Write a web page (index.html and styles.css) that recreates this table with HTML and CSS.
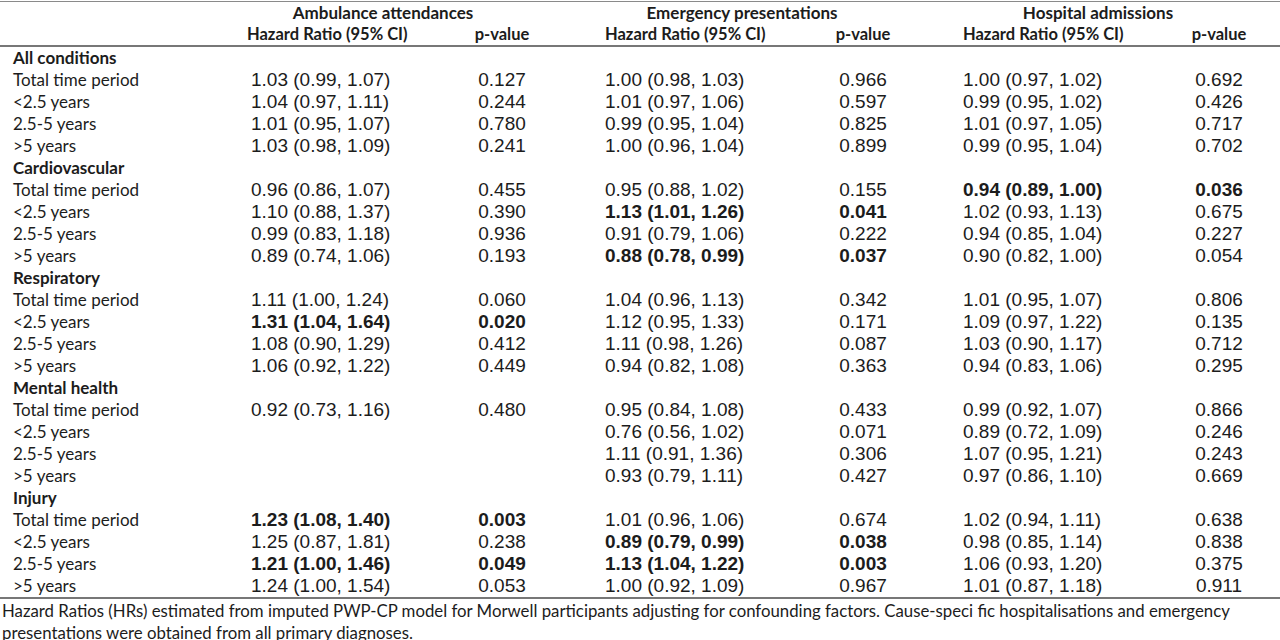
FILE: index.html
```html
<!DOCTYPE html>
<html>
<head>
    <meta charset="UTF-8">
    <title>Hazard ratios</title>
    <link rel="stylesheet" href="styles.css">
</head>
<body>
    <table class="hr-table">
        <colgroup>
            <col class="c-label">
            <col class="c-hr1">
            <col class="c-p1">
            <col class="c-hr2">
            <col class="c-p2">
            <col class="c-hr3">
            <col class="c-p3">
        </colgroup>
        <thead>
            <tr class="group-row">
                <th></th>
                <th colspan="2" class="grp grp-amb">Ambulance attendances</th>
                <th colspan="2" class="grp grp-emg">Emergency presentations</th>
                <th colspan="2" class="grp grp-hos">Hospital admissions</th>
            </tr>
            <tr class="sub-row">
                <th></th>
                <th class="h-hr h1">Hazard Ratio (95% CI)</th>
                <th class="h-p">p-value</th>
                <th class="h-hr h2">Hazard Ratio (95% CI)</th>
                <th class="h-p">p-value</th>
                <th class="h-hr h3">Hazard Ratio (95% CI)</th>
                <th class="h-p">p-value</th>
            </tr>
        </thead>
        <tbody>
            <tr><td class="cat" colspan="7">All conditions</td></tr>
            <tr><td class="lbl">Total time period</td><td class="hr h1">1.03 (0.99, 1.07)</td><td class="pv">0.127</td><td class="hr h2">1.00 (0.98, 1.03)</td><td class="pv">0.966</td><td class="hr h3">1.00 (0.97, 1.02)</td><td class="pv">0.692</td></tr>
            <tr><td class="lbl">&lt;2.5 years</td><td class="hr h1">1.04 (0.97, 1.11)</td><td class="pv">0.244</td><td class="hr h2">1.01 (0.97, 1.06)</td><td class="pv">0.597</td><td class="hr h3">0.99 (0.95, 1.02)</td><td class="pv">0.426</td></tr>
            <tr><td class="lbl">2.5-5 years</td><td class="hr h1">1.01 (0.95, 1.07)</td><td class="pv">0.780</td><td class="hr h2">0.99 (0.95, 1.04)</td><td class="pv">0.825</td><td class="hr h3">1.01 (0.97, 1.05)</td><td class="pv">0.717</td></tr>
            <tr><td class="lbl">&gt;5 years</td><td class="hr h1">1.03 (0.98, 1.09)</td><td class="pv">0.241</td><td class="hr h2">1.00 (0.96, 1.04)</td><td class="pv">0.899</td><td class="hr h3">0.99 (0.95, 1.04)</td><td class="pv">0.702</td></tr>

            <tr><td class="cat" colspan="7">Cardiovascular</td></tr>
            <tr><td class="lbl">Total time period</td><td class="hr h1">0.96 (0.86, 1.07)</td><td class="pv">0.455</td><td class="hr h2">0.95 (0.88, 1.02)</td><td class="pv">0.155</td><td class="hr h3 sig">0.94 (0.89, 1.00)</td><td class="pv sig">0.036</td></tr>
            <tr><td class="lbl">&lt;2.5 years</td><td class="hr h1">1.10 (0.88, 1.37)</td><td class="pv">0.390</td><td class="hr h2 sig">1.13 (1.01, 1.26)</td><td class="pv sig">0.041</td><td class="hr h3">1.02 (0.93, 1.13)</td><td class="pv">0.675</td></tr>
            <tr><td class="lbl">2.5-5 years</td><td class="hr h1">0.99 (0.83, 1.18)</td><td class="pv">0.936</td><td class="hr h2">0.91 (0.79, 1.06)</td><td class="pv">0.222</td><td class="hr h3">0.94 (0.85, 1.04)</td><td class="pv">0.227</td></tr>
            <tr><td class="lbl">&gt;5 years</td><td class="hr h1">0.89 (0.74, 1.06)</td><td class="pv">0.193</td><td class="hr h2 sig">0.88 (0.78, 0.99)</td><td class="pv sig">0.037</td><td class="hr h3">0.90 (0.82, 1.00)</td><td class="pv">0.054</td></tr>

            <tr><td class="cat" colspan="7">Respiratory</td></tr>
            <tr><td class="lbl">Total time period</td><td class="hr h1">1.11 (1.00, 1.24)</td><td class="pv">0.060</td><td class="hr h2">1.04 (0.96, 1.13)</td><td class="pv">0.342</td><td class="hr h3">1.01 (0.95, 1.07)</td><td class="pv">0.806</td></tr>
            <tr><td class="lbl">&lt;2.5 years</td><td class="hr h1 sig">1.31 (1.04, 1.64)</td><td class="pv sig">0.020</td><td class="hr h2">1.12 (0.95, 1.33)</td><td class="pv">0.171</td><td class="hr h3">1.09 (0.97, 1.22)</td><td class="pv">0.135</td></tr>
            <tr><td class="lbl">2.5-5 years</td><td class="hr h1">1.08 (0.90, 1.29)</td><td class="pv">0.412</td><td class="hr h2">1.11 (0.98, 1.26)</td><td class="pv">0.087</td><td class="hr h3">1.03 (0.90, 1.17)</td><td class="pv">0.712</td></tr>
            <tr><td class="lbl">&gt;5 years</td><td class="hr h1">1.06 (0.92, 1.22)</td><td class="pv">0.449</td><td class="hr h2">0.94 (0.82, 1.08)</td><td class="pv">0.363</td><td class="hr h3">0.94 (0.83, 1.06)</td><td class="pv">0.295</td></tr>

            <tr><td class="cat" colspan="7">Mental health</td></tr>
            <tr><td class="lbl">Total time period</td><td class="hr h1">0.92 (0.73, 1.16)</td><td class="pv">0.480</td><td class="hr h2">0.95 (0.84, 1.08)</td><td class="pv">0.433</td><td class="hr h3">0.99 (0.92, 1.07)</td><td class="pv">0.866</td></tr>
            <tr><td class="lbl">&lt;2.5 years</td><td class="hr h1"></td><td class="pv"></td><td class="hr h2">0.76 (0.56, 1.02)</td><td class="pv">0.071</td><td class="hr h3">0.89 (0.72, 1.09)</td><td class="pv">0.246</td></tr>
            <tr><td class="lbl">2.5-5 years</td><td class="hr h1"></td><td class="pv"></td><td class="hr h2">1.11 (0.91, 1.36)</td><td class="pv">0.306</td><td class="hr h3">1.07 (0.95, 1.21)</td><td class="pv">0.243</td></tr>
            <tr><td class="lbl">&gt;5 years</td><td class="hr h1"></td><td class="pv"></td><td class="hr h2">0.93 (0.79, 1.11)</td><td class="pv">0.427</td><td class="hr h3">0.97 (0.86, 1.10)</td><td class="pv">0.669</td></tr>

            <tr><td class="cat" colspan="7">Injury</td></tr>
            <tr><td class="lbl">Total time period</td><td class="hr h1 sig">1.23 (1.08, 1.40)</td><td class="pv sig">0.003</td><td class="hr h2">1.01 (0.96, 1.06)</td><td class="pv">0.674</td><td class="hr h3">1.02 (0.94, 1.11)</td><td class="pv">0.638</td></tr>
            <tr><td class="lbl">&lt;2.5 years</td><td class="hr h1">1.25 (0.87, 1.81)</td><td class="pv">0.238</td><td class="hr h2 sig">0.89 (0.79, 0.99)</td><td class="pv sig">0.038</td><td class="hr h3">0.98 (0.85, 1.14)</td><td class="pv">0.838</td></tr>
            <tr><td class="lbl">2.5-5 years</td><td class="hr h1 sig">1.21 (1.00, 1.46)</td><td class="pv sig">0.049</td><td class="hr h2 sig">1.13 (1.04, 1.22)</td><td class="pv sig">0.003</td><td class="hr h3">1.06 (0.93, 1.20)</td><td class="pv">0.375</td></tr>
            <tr class="last"><td class="lbl">&gt;5 years</td><td class="hr h1">1.24 (1.00, 1.54)</td><td class="pv">0.053</td><td class="hr h2">1.00 (0.92, 1.09)</td><td class="pv">0.967</td><td class="hr h3">1.01 (0.87, 1.18)</td><td class="pv">0.911</td></tr>
        </tbody>
    </table>
    <p class="note">Hazard Ratios (HRs) estimated from imputed PWP-CP model for Morwell participants adjusting for confounding factors. Cause-speci fic hospitalisations and emergency presentations were obtained from all primary diagnoses.</p>
</body>
</html>
```

FILE: styles.css
```css
body {
    margin: 0;
    background-color: #fff;
    color: #1c1c1c;
    font-family: Lato, "Open Sans", sans-serif;
}
.hr-table {
    width: 1280px;
    margin-top: 1px;
    border-collapse: collapse;
    table-layout: fixed;
    border-top: 1px solid #8a8a8a;
}
.c-label { width: 240px; }
.c-hr1 { width: 200px; }
.c-p1 { width: 124px; }
.c-hr2 { width: 236px; }
.c-p2 { width: 126px; }
.c-hr3 { width: 232px; }
.c-p3 { width: 122px; }
th, td {
    height: 22px;
    padding: 0;
    line-height: 22px;
    white-space: nowrap;
    overflow: visible;
}
th {
    font-size: 16.5px;
    font-weight: bold;
}
.group-row th {
    height: 21px;
    line-height: 21px;
}
.sub-row th {
    border-bottom: 2px solid #777;
}
.grp {
    text-align: center;
    font-size: 17px;
}
.grp-amb { padding-right: 38px; }
.grp-emg { padding-right: 6px; }
.grp-hos { padding-right: 10px; }
.h-hr {
    text-align: left;
}
.h-p {
    text-align: center;
}
.h-hr.h1 { padding-left: 7px; }
.h-hr.h2 { padding-left: 41px; }
.h-hr.h3 { padding-left: 37px; }
.cat {
    padding-left: 13px;
    font-size: 17px;
    font-weight: bold;
}
.lbl {
    padding-left: 13px;
    font-size: 17px;
}
.hr, .pv {
    font-family: "Liberation Sans", Arial, sans-serif;
    font-size: 19px;
}
.hr.h1 { padding-left: 11px; }
.hr.h2 { padding-left: 41px; }
.hr.h3 { padding-left: 37px; }
.pv {
    text-align: center;
}
.sig {
    font-weight: bold;
}
.last td {
    border-bottom: 2px solid #777;
}
.note {
    margin: 1px 0 0;
    padding-left: 2px;
    font-size: 16.8px;
    line-height: 22px;
}
```
